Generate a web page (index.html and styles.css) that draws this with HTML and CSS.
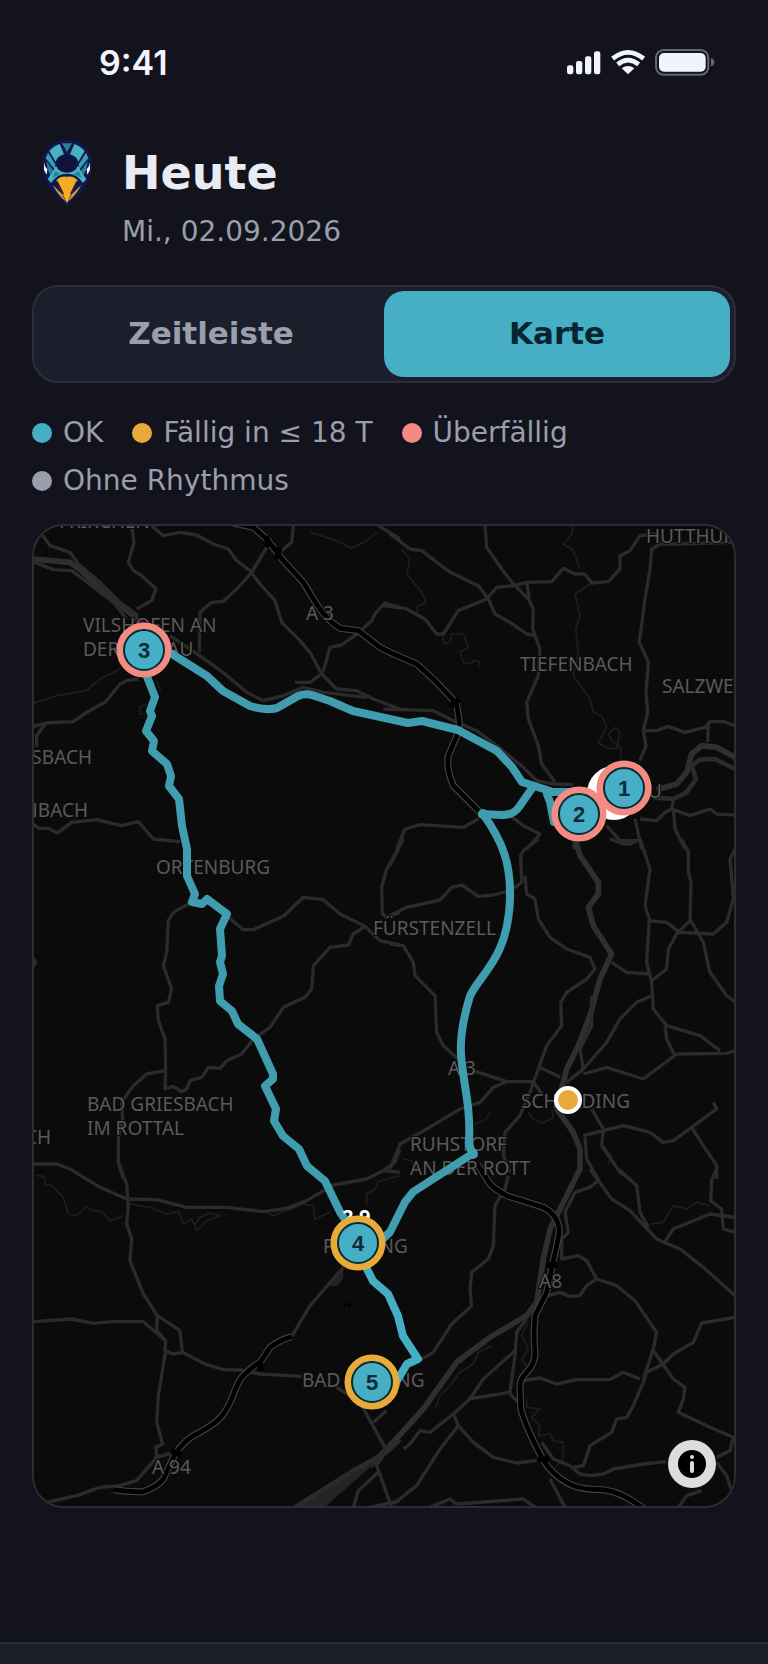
FILE: index.html
```html
<!DOCTYPE html>
<html lang="de">
<head>
    <meta charset="UTF-8">
    <meta name="viewport" content="width=device-width, initial-scale=1.0">
    <title>Heute</title>
    <link rel="stylesheet" href="styles.css">
</head>
<body>
<div class="status-bar">
    <span class="status-time">9:41</span>
    <svg class="status-icons" viewBox="15 20 450 90" aria-hidden="true">
        <g fill="#f1f4fc">
            <rect x="21" y="75" width="19" height="27" rx="7"/>
            <rect x="48" y="62" width="19" height="40" rx="7"/>
            <rect x="75" y="48" width="19" height="54" rx="7"/>
            <rect x="102" y="33" width="19" height="69" rx="7"/>
            <path d="M204 102 L185 84 Q204 70 223 84 Z"/>
            <rect x="297" y="38" width="140" height="56" rx="15"/>
        </g>
        <g fill="none" stroke="#f1f4fc" stroke-width="14">
            <path d="M158 55 Q204 17 251 55"/>
            <path d="M173 72 Q204 47 236 72"/>
        </g>
        <rect x="288" y="29" width="157" height="74" rx="23" fill="none" stroke="#65666f" stroke-width="6"/>
        <path d="M453 54 Q463 56 463 66 Q463 76 453 78 Z" fill="#65666f"/>
    </svg>
</div>

<main class="page">
    <header class="header">
        <svg class="logo" viewBox="35 25 210 210" aria-hidden="true">
            <path d="M140 31 C186 31 216 66 216 108 C216 150 182 190 140 230 C98 190 64 150 64 108 C64 66 94 31 140 31 Z" fill="#11164b"/>
            <path d="M125 41 L155 41 L140 67 Z" fill="#2a8299"/>
            <path d="M118 43 Q100 49 87 64 L106 96 Q111 80 131 74 Z M162 43 Q180 49 193 64 L174 96 Q169 80 149 74 Z" fill="#48b1c6"/>
            <path d="M83 69 L76 86 L104 120 L105 104 Z M197 69 L204 86 L176 120 L175 104 Z" fill="#369db5"/>
            <path d="M78 94 L102 127 L92 140 L82 120 Z M202 94 L178 127 L188 140 L198 120 Z" fill="#257f92"/>
            <path d="M107 108 Q115 128 140 129 Q165 128 173 108 L185 130 L198 148 L188 160 Q170 132 140 132 Q110 132 92 160 L82 148 L95 130 Z" fill="#48b1c6"/>
            <path d="M96 145 L105 124 L120 134 Z M184 145 L175 124 L160 134 Z" fill="#1f8795"/>
            <circle cx="140" cy="101" r="26" fill="#10123a"/>
            <path d="M72 98 L75 111 L81 119 L79 135 L71 120 Z M208 98 L205 111 L199 119 L201 135 L209 120 Z" fill="#fff"/>
            <path d="M108 153 Q119 138 140 141 Q161 138 172 153 L153 193 L140 221 L127 193 Z" fill="#f4ac24"/>
            <path d="M97 165 L125 193 L137 216 Q110 193 97 165 Z M183 165 L155 193 L143 216 Q170 193 183 165 Z" fill="#d6913a"/>
            <path d="M110 155 L129 193 M170 155 L151 193" stroke="#11164b" stroke-width="4"/>
        </svg>
        <h1>Heute</h1>
        <p class="date">Mi., 02.09.2026</p>
    </header>

    <div class="segmented">
        <button type="button" class="segment">Zeitleiste</button>
        <button type="button" class="segment active">Karte</button>
    </div>

    <ul class="legend">
        <li><span class="dot ok"></span>OK</li>
        <li><span class="dot due"></span>Fällig in ≤ 18 T</li>
        <li><span class="dot overdue"></span>Überfällig</li>
        <li><span class="dot none"></span>Ohne Rhythmus</li>
    </ul>

    <section class="map">
        <svg viewBox="34 527 700 980" role="img" aria-label="Karte mit Route">
            <defs>
                <!-- Autobahnen: werden zweimal gezeichnet (Rand + Fahrbahn) -->
                <g id="motorways">
                    <path transform="translate(20 520) scale(.33333)" d="M640 12 L700 25 L740 60 L790 125 L850 190 L880 240 Q915 300 960 328 L1015 335 L1080 385 L1110 400 L1190 435 L1250 490 L1310 555 L1318 610 L1315 640 L1285 710 Q1278 750 1300 800 L1380 880"/>
                    <path transform="translate(20 1170) scale(.33333)" d="M280 962 Q330 970 370 968 Q410 955 430 930 L465 855 Q490 820 520 800 Q590 765 610 735 C640 695 640 660 665 625 Q700 590 720 580 L750 535 Q775 515 815 503"/>
                    <path transform="translate(390 1170) scale(.33333)" d="M262 -15 L300 45 Q320 65 350 80 Q430 105 460 115 Q508 140 508 190 L500 230 L485 300 L470 370 L435 440 L432 500 L435 560 Q430 590 410 610 Q390 630 390 650 L392 715 Q400 760 455 865 L475 895 Q510 935 550 950 Q580 962 640 962 Q700 970 765 1022"/>
                </g>
            </defs>

            <rect x="34" y="527" width="700" height="980" fill="#0b0b0b"/>

            <g transform="translate(20 520) scale(.33333)">
                <path class="track" d="M870 40 L950 65 L995 88 L1040 65 L1070 40 M40 553 L110 530 L200 515 L240 480 L300 450 M380 555 L358 565 L360 585 L375 585 M410 485 L422 515"/>
                <path class="water" d="M40 120 L150 130 L185 155 L240 210 L340 290 L370 320"/>
                <path class="road" d="M65 45 L90 80 L150 100 L175 135 L240 190 L300 250 L355 290 M40 128 L100 152 L155 155 L215 200 L280 250 L320 300 M335 20 L342 70 L325 130 L340 155 L365 170 L408 210 L395 245 L350 270 M395 20 L430 50 L480 40 L530 48 L580 75 L625 90 L650 125 L690 155 L720 195 L765 245 L785 310 L840 365 L870 400 L905 465 L950 510 L1010 515 L1060 540 L1140 570"/>
                <path class="road" d="M740 85 L695 160 L650 210 L610 247 L575 250 L540 280 L538 400 M820 20 L815 70 L785 95 M1075 20 L1140 60 M1140 265 L1095 252 L1065 285 L1055 305 L1010 345 L965 378 L930 385 L915 440 L905 465 L870 490 L825 490 M450 350 L560 425 L615 465 L680 520 L730 545 L790 530 L850 505 L910 520 L1040 535"/>
                <path class="road" d="M40 622 L80 612 L160 608 L200 580 L255 550 L300 495 L320 485 L355 480 M75 615 L50 650 L50 685 M40 915 L55 928 L85 928 L112 942 L155 910 L230 902 L305 920 L355 908 L400 960 L480 968"/>
            </g>

            <g transform="translate(390 520) scale(.33333)">
                <path class="track" d="M550 20 L545 45 L520 75 L550 95 L570 150 M605 192 L555 225 L570 290 L557 330 L565 400 L550 470 L600 540 L610 580 L635 590 L650 625 L625 670 L650 687 L680 690 L690 640 L675 626 L655 645 L665 665 L692 685 V720 M35 90 L60 120 L50 165 L95 220 L108 250 L80 265 L85 285 M160 350 L160 372 L180 370 L185 345 L220 345 L235 385 L210 400 L220 430 L245 435 L250 425 L268 428 V440"/>
                <path class="water" d="M1035 715 L980 685 L935 680 L905 705 L890 760 L860 795 L800 812"/>
                <path class="road wide" d="M1035 750 L975 720 L930 722 L905 740 L918 780 L890 820 L850 840 L790 835"/>
                <path class="road" d="M0 45 L60 90 L95 95 L180 160 L265 200 L295 240 L315 285 L360 310 L410 345 L435 350 M285 20 L290 85 L335 150 L370 195 L415 240 L430 270 L428 330 L450 390 L445 470 L410 550 L415 600 L445 680 L455 735 L495 790 M410 190 L418 240"/>
                <path class="road" d="M-20 260 L45 268 L105 300 L140 345 L160 345 L205 275 L290 240 L320 205 L370 200 L410 190 L485 188 L520 148 L555 165 L585 165 L605 192 L655 188 L690 150 L690 110 L720 95 L750 50 L800 45 M1030 70 L870 75 L810 75 L785 90 L780 150 L765 240 L748 370 L775 430 L768 520 L773 580 L760 635 L768 680 L750 725"/>
                <path class="road" d="M760 635 L800 635 L835 622 L885 640 L945 625 L960 608 L1000 608 L1035 620 M955 610 L953 670 M750 900 L800 905 L825 880 L845 870 L850 845 M845 870 L900 890 L960 870 L980 885 L1035 888 M850 870 L855 930 L885 990 M650 920 L690 965 L740 965 M735 900 L755 990 M552 940 V990"/>
                <path class="road" d="M-20 570 L130 575 L190 605 L260 635 L320 680 L400 745 L440 785 L490 795 L550 797 M20 990 L45 930 L90 917 L220 925 L265 900 M360 890 L400 920 L450 945 L410 990"/>
            </g>

            <g transform="translate(20 840) scale(.33333)">
                <path d="M40 348 L53 370 L40 390 Z" fill="#2b2b2b"/>
                <path class="road" d="M505 195 L460 220 L445 245 L440 340 L430 380 L455 450 L445 490 L412 500 L415 545 L435 600 L437 690 L435 750 L460 742 L485 758 L500 750 L510 725 L545 715 L565 685 L600 688 L620 665 L665 645 L700 600 L750 565 L790 505 L855 475 L875 450 L880 380 L930 325 L985 318 L1000 285 L1035 262"/>
                <path class="road" d="M625 235 L670 272 L700 272 L790 232 L850 175 L910 182 L960 225 L1035 262 L1080 305 L1140 318 M1140 20 L1100 90 L1085 145 L1087 225 L1100 235 L1140 220 M435 695 L380 705 L340 740 L305 790 L308 840 L295 900 L295 970 L310 1020 M1140 930 L1125 970 L1090 995"/>
            </g>

            <g transform="translate(390 840) scale(.33333)">
                <path class="track" d="M300 820 L290 840 L255 855 M415 820 L430 840 L460 852 L490 835 L485 810 M40 960 L65 965 L80 1000 M640 920 L665 950 L655 975"/>
                <path class="water" d="M555 0 L570 50 L625 130 L625 165 L595 205 L610 260 L665 345 L630 420 L600 530 L565 620 L530 690 L515 750 L500 810 L550 880 L570 930 L570 990 L530 1070 L480 1170 L460 1260 L440 1390 L410 1430 L300 1495 L200 1570 L100 1710 L0 1820 L-60 1880"/>
                <path class="road" d="M40 0 L0 80 M445 0 L400 35 L392 50 L395 130 L360 155 L310 168 L265 172 L215 138 L185 145 L150 183 L50 205 L0 230 M405 110 L410 165 L435 180 L445 240 L480 295 L530 330 L600 355 L615 390 L590 420 L530 460 L512 490 L515 560 L470 620 L445 690 L420 760 L390 830 L345 880 L340 950 L360 1000"/>
                <path class="road" d="M605 470 L605 560 L570 630 L580 690 M665 370 L710 400 L780 405 M660 0 L700 15 L720 15 L750 0 L780 90 L765 200 L778 240 L770 370 L785 430 L790 510 L830 560 L930 590 L990 635 M775 245 L830 250 L870 280 L970 285 L1010 250 L1030 180 L1020 60 L1035 30"/>
                <path class="road" d="M875 0 L895 40 L895 100 L903 130 L900 240 L940 310 L960 400 L1010 470 L1035 488 M900 245 L860 285 L835 330 L830 390 L785 425 M785 470 L740 490 L690 540 L650 610 L580 690 L530 730 M580 705 L650 685 L760 720 L860 645 L1010 643 L1035 635 M825 560 L830 600 L855 650"/>
                <path class="road" d="M0 315 L40 320 L70 370 L75 410 L135 470 L140 580 L160 620 L210 665 M250 695 L350 728 L430 728 L460 770 M450 685 L510 715 M350 728 L310 745 L270 790 L210 810 L110 870 L30 915 L0 990"/>
                <path class="road" d="M580 890 L640 875 L700 860 L780 880 L820 910 L850 905 L905 865 L980 810 L970 790 M905 865 L940 920 L980 980 L980 1020 M585 895 L590 960 L625 1020 M605 810 L640 870 L635 920 L690 1000 L720 1020"/>
            </g>

            <g transform="translate(20 1170) scale(.33333)">
                <path class="track" d="M50 20 L72 22 L78 48 L95 50 L130 85 L145 135 L170 140 L200 112 L215 125 L245 128 L270 155 L310 140 M330 105 L390 115 L440 135 L475 128 L490 165 L515 150 L530 185 L560 155 L600 140 L570 132 L540 145 L525 165 M740 130 L760 140 L850 105 L880 110 L885 150 L930 130 M1040 110 L1040 75 L1065 60 L1075 38 L1140 20"/>
                <path d="M820 1018 L1100 850 L1000 940 L910 1018 Z" fill="#242424"/>
                <path d="M970 300 L970 330 L950 352 L930 350 Z" fill="#222"/>
                <path d="M970 414 Q980 396 990 414" fill="none" stroke="#000" stroke-width="8"/>
                <path class="road wide" d="M1140 810 L1100 850 L1000 905 L820 1018"/>
                <path class="road" d="M40 -15 L110 -15 L150 0 L240 55 L320 90 L410 92 L500 115 L620 115 L730 128 L800 118 L860 95 L940 48 L1040 30 L1090 5 L1140 10 M295 -20 L320 45 L325 110 L320 165 L335 210 L330 275 L370 375 L412 440 L480 485 L487 550 M412 440 L410 485 L437 515 L435 545 L460 555 L487 550 L555 585 L610 602 L660 603 L720 615 L845 622"/>
                <path class="road" d="M40 458 L155 450 L220 463 L280 458 L370 458 L437 515 M437 545 L415 680 L410 760 L428 825 L408 835 L410 865 M460 850 L410 865 L350 935 L300 950 L240 955 L170 980 L80 1000 M815 503 L870 410 L970 295 M950 655 L1020 700 L1100 845 L1070 890 L1115 1015 M1100 725 L1060 760 M1080 905 L1015 965 L1000 1015 M1050 1015 L1140 995"/>
            </g>

            <g transform="translate(390 1170) scale(.33333)">
                <path class="track" d="M305 530 L265 550 L250 585 L210 610 L180 650 L150 680 L135 720 M415 460 L395 500 L415 540 L395 570 L415 600 L400 620 M410 690 L410 715 L450 720 L425 745 L450 770 L445 800 L480 795 L490 815 L520 820 L520 870 L500 890 M780 165 L820 160 L850 110 L890 120 L920 100 L960 110"/>
                <path class="road" d="M355 20 L345 60 L315 110 L310 230 L295 270 L245 310 L240 360 L245 410 L185 465 L130 550 L95 570 M625 35 L600 55 L555 70 L525 130 L535 190 L515 210 L515 270 L565 260 L590 275 L620 330 L680 350 L735 395 L800 490 L790 540 L760 630 M620 330 L590 350 L570 380 L540 382 L510 370 L475 380"/>
                <path class="road" d="M600 0 L665 90 L720 125 L800 210 L870 240 L940 295 L1035 380 M685 0 L740 50 L750 130 L775 175 M820 225 L850 180 L960 135 L1035 145 M980 0 L965 35 L962 95 L995 120 L1000 180 L1035 190"/>
                <path class="road" d="M1035 445 L935 462 L910 520 L850 555 L820 585 L770 610 L760 640 L730 710 L710 745 L680 750 L665 790 L600 830 L580 890 L550 895 M790 545 L850 630 L885 655 L880 690 L865 730 L960 775 L1030 805 L1020 845 L980 865 M400 635 L450 627 L500 645 L560 632 L660 632 L700 610 L750 630"/>
                <path class="road" d="M410 450 L380 490 L375 560 L360 670 L235 690 M375 545 L280 630 L240 690 L190 735 L120 790 L90 785 L60 825 L40 840 M190 735 L205 770 L150 840 L80 950 L10 1005 M205 770 L250 820 L310 865 L380 882 L440 875 M360 675 L385 700"/>
                <path class="road" d="M455 820 L490 870 L540 890 L570 915 L600 920 L640 915 L670 900 L760 885 L830 878 M480 930 L525 1015 M120 1015 L180 990 L200 1005 L400 990 L440 1018 M865 1015 L890 980 L935 965 M980 880 L1010 920 L1025 965"/>
            </g>

            <use href="#motorways" class="motorway-edge"/>
            <use href="#motorways" class="motorway"/>
            <g class="junction">
                <path d="M266 537 L269 548 M279 548 L277 560 M450 708 L459 700 M260 1363 L261 1372 M171 1452 L182 1456 M547 1266 L558 1266 M538 1460 L549 1460"/>
            </g>

            <g class="labels">
                <text x="150" y="529" text-anchor="end">HOFKIRCHEN</text>
                <text x="646" y="544">HUTTHURM</text>
                <text x="306" y="621">A 3</text>
                <text x="83" y="633">VILSHOFEN AN</text>
                <text x="83" y="657">DER DONAU</text>
                <text x="520" y="672">TIEFENBACH</text>
                <text x="662" y="694">SALZWEG</text>
                <text x="92" y="765" text-anchor="end">LSBACH</text>
                <text x="662" y="799" text-anchor="end">PASSAU</text>
                <text x="88" y="818" text-anchor="end">NBACH</text>
                <text x="156" y="875">ORTENBURG</text>
                <text x="373" y="936">FÜRSTENZELL</text>
                <text x="448" y="1076">A 3</text>
                <text x="521" y="1109">SCHÄRDING</text>
                <text x="87" y="1112">BAD GRIESBACH</text>
                <text x="87" y="1136">IM ROTTAL</text>
                <text x="51" y="1145" text-anchor="end">CH</text>
                <text x="410" y="1152">RUHSTORF</text>
                <text x="410" y="1176">AN DER ROTT</text>
                <text x="323" y="1254">POCKING</text>
                <text x="562" y="1289" text-anchor="end">A8</text>
                <text x="302" y="1388">BAD FÜSSING</text>
                <text x="152" y="1475">A 94</text>
            </g>

            <g class="route">
                <path d="M165 651 L172 655 L207 677 L223 692 L250 707 Q265 712 277 709 L298 697 Q305 694 312 696 L330 702 L353 712 L408 724 L422 722 L458 731 L497 752 L512 768 L522 783 L553 793 L577 793"/>
                <path d="M146 675 L155 698 L150 712 L152 717 L146 732 L154 742 L152 752 L167 765 L171 777 L169 787 L179 800 L182 827 L187 850 L187 877 L195 895 L192 903 L202 905 L207 900 L227 915 L220 930 L222 957 L220 963 L223 975 L219 987 L220 1002 L232 1012 L238 1025 L257 1040 L273 1075 L273 1080 L265 1087 L276 1110 L274 1122 L283 1137 L299 1150 L307 1167 L325 1182 L340 1213 L350 1228"/>
                <path d="M533 788 L519 808 Q514 816 502 816 L482 815 M483 815 C503 843 511 865 510 900 C508 960 480 975 470 997 C463 1020 460 1038 461 1055 C463 1085 471 1105 469 1145 L472 1155 L430 1182 L413 1193 L405 1203 L390 1233 L370 1252"/>
                <path class="spur" d="M547 795 L550 803 L554 823"/>
                <circle cx="483" cy="815" r="5"/>
                <circle cx="473" cy="1155" r="5"/>
            </g>
            <path class="route-back" d="M366 1268 L373 1282 L388 1295 L398 1317 L403 1337 L418 1360 L407 1365 L395 1385"/>

            <text x="342" y="1225" class="map-date">2.9.</text>

            <circle cx="614" cy="794" r="27" fill="#fff"/>
            <circle cx="568" cy="1101" r="12" fill="#e8ab3a" stroke="#fff" stroke-width="4"/>

            <g class="stop overdue-stop">
                <circle cx="624" cy="789" r="24"/>
                <text x="624" y="797">1</text>
            </g>
            <g class="stop overdue-stop">
                <circle cx="579" cy="815" r="24"/>
                <text x="579" y="823">2</text>
            </g>
            <g class="stop overdue-stop">
                <circle cx="144" cy="651" r="24"/>
                <text x="144" y="659">3</text>
            </g>
            <g class="stop due-stop">
                <circle cx="358" cy="1244" r="24"/>
                <text x="358" y="1252">4</text>
            </g>
            <g class="stop due-stop">
                <circle cx="372" cy="1383" r="24"/>
                <text x="372" y="1391">5</text>
            </g>
            <g class="stop-line">
                <circle cx="624" cy="789" r="20"/>
                <circle cx="579" cy="815" r="20"/>
                <circle cx="144" cy="651" r="20"/>
                <circle cx="358" cy="1244" r="20"/>
                <circle cx="372" cy="1383" r="20"/>
            </g>
        </svg>
        <button type="button" class="info" aria-label="Kartenhinweise">
            <svg viewBox="0 0 28 28" aria-hidden="true">
                <circle cx="14" cy="14" r="14" fill="#000"/>
                <circle cx="14" cy="7" r="2" fill="#dcdddc"/>
                <rect x="12" y="11" width="4" height="12" rx="2" fill="#dcdddc"/>
            </svg>
        </button>
    </section>
</main>

<nav class="tab-bar"></nav>
</body>
</html>
```
FILE: styles.css
```css
* {
    margin: 0;
    padding: 0;
    box-sizing: border-box;
}

body {
    display: flex;
    flex-direction: column;
    min-height: 100vh;
    background: #12131c;
    color: #9b9eac;
    font-family: "DejaVu Sans", sans-serif;
    font-size: 28px;
}

/* Statusleiste */
.status-bar {
    display: flex;
    justify-content: space-between;
    align-items: center;
    height: 124px;
    padding: 0 53px 0 99px;
}

.status-time {
    font-family: Inter, sans-serif;
    font-size: 34px;
    font-weight: 600;
    color: #f1f4fc;
}

.status-icons {
    width: 150px;
    height: 30px;
}

.page {
    padding: 14px 32px 32px;
}

/* Kopfbereich */
.header {
    display: grid;
    grid-template-columns: 70px 1fr;
    column-gap: 20px;
    row-gap: 6px;
}

.logo {
    width: 70px;
    height: 70px;
}

h1 {
    font-size: 46px;
    line-height: 70px;
    color: #e9ebf3;
}

.date {
    grid-column: 2;
    line-height: 36px;
}

/* Umschalter */
.segmented {
    display: flex;
    margin-top: 35px;
    padding: 4px;
    background: #1c1f2b;
    border: 2px solid #2b2e3a;
    border-radius: 26px;
}

.segment {
    flex: 1;
    height: 86px;
    padding-bottom: 3px;
    border: none;
    border-radius: 20px;
    background: transparent;
    color: #9b9eac;
    font-family: inherit;
    font-size: 31px;
    font-weight: bold;
    cursor: pointer;
}

.segment.active {
    background: #46afc6;
    color: #07252e;
}

/* Legende */
.legend {
    display: flex;
    flex-wrap: wrap;
    gap: 12px 29px;
    margin-top: 32px;
    list-style: none;
}

.legend li {
    display: flex;
    align-items: center;
    gap: 11px;
    line-height: 36px;
}

.dot {
    width: 20px;
    height: 20px;
    border-radius: 50%;
}

.ok {
    background: #46afc6;
}

.due {
    background: #e8ab3a;
}

.overdue {
    background: #f38b82;
}

.none {
    background: #9b9eac;
}

/* Karte */
.map {
    position: relative;
    margin-top: 25px;
    border: 2px solid #2b2c38;
    border-radius: 32px;
    overflow: hidden;
}

.map > svg {
    display: block;
    width: 100%;
}

.road,
.water,
.track {
    fill: none;
    stroke: #2b2b2b;
    stroke-width: 10;
    stroke-linejoin: round;
}

.road.wide {
    stroke-width: 14;
}

.water {
    stroke: #2f2f2f;
    stroke-width: 17;
}

.track {
    stroke: #1e1e1e;
    stroke-width: 5;
}

.motorway,
.motorway-edge {
    fill: none;
    stroke: #000;
    stroke-width: 14;
    stroke-linejoin: round;
}

.motorway-edge {
    stroke: #414141;
    stroke-width: 21;
}

.junction {
    fill: none;
    stroke: #000;
    stroke-width: 6;
}

.labels text {
    font-family: "Noto Sans", sans-serif;
    font-size: 19px;
    fill: #5a5a5a;
    stroke: #0b0b0b;
    stroke-width: 2;
    paint-order: stroke;
}

.route path,
.route-back {
    fill: none;
    stroke: #409caf;
    stroke-width: 8;
    stroke-linecap: round;
    stroke-linejoin: round;
}

.route circle {
    fill: #409caf;
}

.route-back {
    stroke: #45aec5;
}

.map-date {
    font-family: "Noto Sans", sans-serif;
    font-size: 20px;
    font-weight: bold;
    fill: #fff;
}

.stop circle {
    fill: #46afc6;
    stroke-width: 7;
}

.overdue-stop circle {
    stroke: #f38b82;
}

.due-stop circle {
    stroke: #e8ab3a;
}

.stop-line circle {
    fill: none;
    stroke: #0c2a2f;
    stroke-width: 2;
}

.stop text {
    font-family: "Liberation Sans", sans-serif;
    font-size: 22px;
    font-weight: bold;
    text-anchor: middle;
    fill: #0b2b38;
}

.info {
    position: absolute;
    right: 18px;
    bottom: 18px;
    display: flex;
    align-items: center;
    justify-content: center;
    width: 48px;
    height: 48px;
    border: none;
    border-radius: 50%;
    background: #dcdddc;
    cursor: pointer;
}

.info svg {
    width: 28px;
    height: 28px;
}

.tab-bar {
    height: 22px;
    margin-top: auto;
    background: #1b1e29;
    border-top: 2px solid #2b2e3a;
}
```
